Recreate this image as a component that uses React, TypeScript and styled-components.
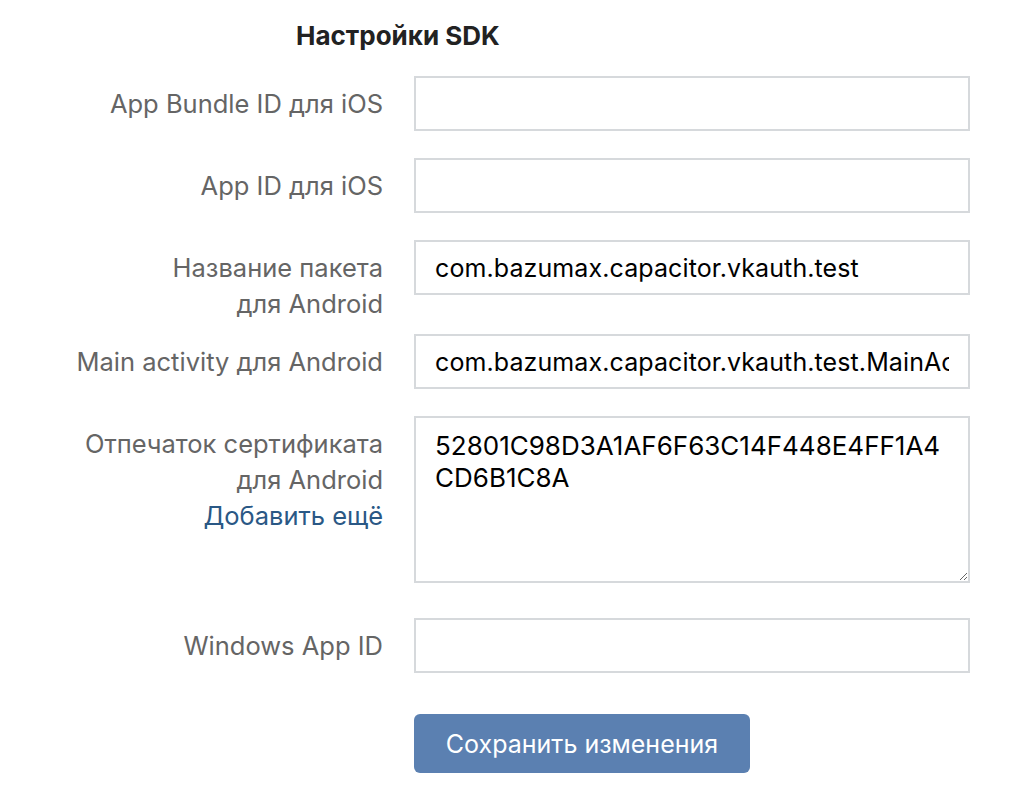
import React from 'react';
import styled, { createGlobalStyle } from 'styled-components';

const Global = createGlobalStyle`
  html, body { margin: 0; padding: 0; background: #ffffff; }
  body { font-family: Inter, "Noto Sans", sans-serif; -webkit-font-smoothing: antialiased; }
`;

const Page = styled.div`
  padding-top: 20px;
  padding-bottom: 20px;
`;

const Title = styled.h2`
  margin: 0 0 0 296px;
  font-size: 26px;
  font-weight: 700;
  line-height: 32px;
  color: #222222;
`;

const Form = styled.div`
  margin-top: 24px;
  display: flex;
  flex-direction: column;
`;

const Row = styled.div<{ $mt: number }>`
  display: flex;
  align-items: flex-start;
  margin-top: ${(p) => p.$mt}px;
`;

const Label = styled.div`
  width: 383px;
  box-sizing: border-box;
  padding-top: 10px;
  text-align: right;
  color: #656565;
  font-size: 25.5px;
  line-height: 36px;
`;

const Link = styled.a`
  display: block;
  color: #2a5885;
  text-decoration: none;
  cursor: pointer;
`;

const Field = styled.div`
  margin-left: 31px;
  width: 556px;
`;

const Input = styled.input`
  box-sizing: border-box;
  display: block;
  width: 100%;
  height: 55px;
  border: 2px solid #d6d9dc;
  border-radius: 0;
  padding: 0 19px;
  font-family: inherit;
  font-size: 25px;
  letter-spacing: 0.1px;
  color: #000000;
  background: #ffffff;
  outline: none;
`;

const TextArea = styled.textarea`
  box-sizing: border-box;
  display: block;
  width: 100%;
  height: 167px;
  border: 2px solid #d6d9dc;
  border-radius: 0;
  padding: 12px 19px;
  font-family: inherit;
  font-size: 26px;
  line-height: 32px;
  color: #000000;
  background: #ffffff;
  outline: none;
  resize: vertical;
`;

const Button = styled.button`
  box-sizing: border-box;
  width: 336px;
  height: 59px;
  border: none;
  border-radius: 6px;
  background: #5b80b1;
  color: #ffffff;
  font-family: inherit;
  font-size: 25px;
  cursor: pointer;
`;

export default function App() {
  return (
    <Page>
      <Global />
      <Title>Настройки SDK</Title>
      <Form>
        <Row $mt={0}>
          <Label>App Bundle ID для iOS</Label>
          <Field>
            <Input defaultValue="" />
          </Field>
        </Row>
        <Row $mt={27}>
          <Label>App ID для iOS</Label>
          <Field>
            <Input defaultValue="" />
          </Field>
        </Row>
        <Row $mt={27}>
          <Label>
            Название пакета
            <br />
            для Android
          </Label>
          <Field>
            <Input defaultValue="com.bazumax.capacitor.vkauth.test" />
          </Field>
        </Row>
        <Row $mt={12}>
          <Label>Main activity для Android</Label>
          <Field>
            <Input defaultValue="com.bazumax.capacitor.vkauth.test.MainActivity" />
          </Field>
        </Row>
        <Row $mt={27}>
          <Label>
            Отпечаток сертификата
            <br />
            для Android
            <Link>Добавить ещё</Link>
          </Label>
          <Field>
            <TextArea defaultValue="52801C98D3A1AF6F63C14F448E4FF1A4CD6B1C8A" />
          </Field>
        </Row>
        <Row $mt={35}>
          <Label>Windows App ID</Label>
          <Field>
            <Input defaultValue="" />
          </Field>
        </Row>
        <Row $mt={41}>
          <Label />
          <Field>
            <Button>Сохранить изменения</Button>
          </Field>
        </Row>
      </Form>
    </Page>
  );
}
